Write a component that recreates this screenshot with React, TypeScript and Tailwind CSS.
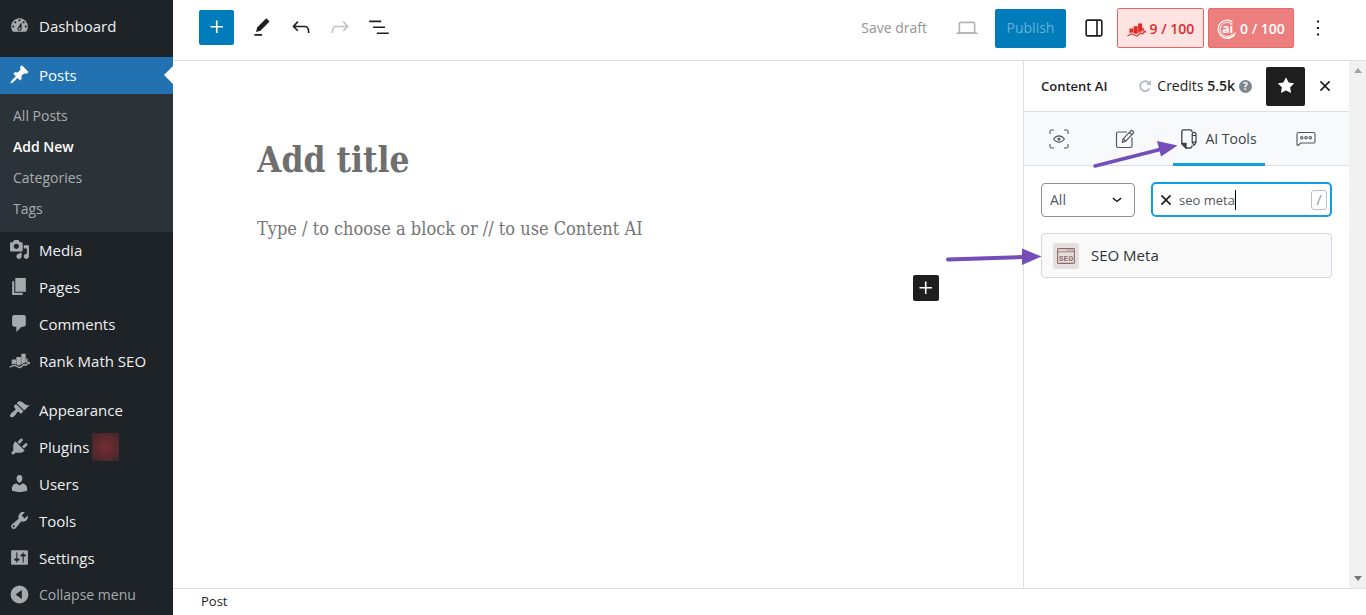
import React from "react";

type IconProps = { d: string; className?: string; box?: number };

function Glyph({ d, className = "size-5", box = 20 }: IconProps) {
  return (
    <svg viewBox={`0 0 ${box} ${box}`} className={className} fill="currentColor" fillRule="evenodd" aria-hidden="true">
      <path d={d} />
    </svg>
  );
}

const dash = {
  dashboard:
    "M3.76 16h12.48c1.1-1.37 1.76-3.11 1.76-5 0-4.42-3.58-8-8-8s-8 3.58-8 8c0 1.89.66 3.63 1.76 5zM10 4c.55 0 1 .45 1 1s-.45 1-1 1-1-.45-1-1 .45-1 1-1zM6 6c.55 0 1 .45 1 1s-.45 1-1 1-1-.45-1-1 .45-1 1-1zm8 0c.55 0 1 .45 1 1s-.45 1-1 1-1-.45-1-1 .45-1 1-1zm-5.37 5.55L12 7v6c0 1.1-.9 2-2 2s-2-.9-2-2c0-.57.24-1.08.63-1.45zM4 10c.55 0 1 .45 1 1s-.45 1-1 1-1-.45-1-1 .45-1 1-1zm12 0c.55 0 1 .45 1 1s-.45 1-1 1-1-.45-1-1 .45-1 1-1zm-5 3c0-.55-.45-1-1-1s-1 .45-1 1 .45 1 1 1 1-.45 1-1z",
  post: "M10.44 3.02l1.82-1.82 6.36 6.35-1.83 1.82c-1.05-.68-2.48-.57-3.41.36l-.75.75c-.92.93-1.04 2.35-.35 3.41l-1.83 1.82-2.41-2.41-2.8 2.79c-.42.42-3.38 2.71-3.8 2.29s1.86-3.39 2.28-3.81l2.79-2.79L4.1 9.36l1.83-1.82c1.05.69 2.48.57 3.4-.36l.75-.75c.93-.92 1.05-2.35.36-3.41z",
  media:
    "M13 11V4c0-.55-.45-1-1-1h-1.67L9 1H5L3.67 3H2c-.55 0-1 .45-1 1v7c0 .55.45 1 1 1h10c.55 0 1-.45 1-1zM7 4.5c1.38 0 2.5 1.12 2.5 2.5S8.38 9.5 7 9.5 4.5 8.38 4.5 7 5.62 4.5 7 4.5zM14 6h5v10.5c0 1.38-1.12 2.5-2.5 2.5S14 17.88 14 16.5s1.12-2.5 2.5-2.5c.17 0 .34.02.5.05V9h-3V6zm-4 8.05V13h2v3.5c0 1.38-1.12 2.5-2.5 2.5S7 17.88 7 16.5 8.12 14 9.5 14c.17 0 .34.02.5.05z",
  page: "M6 15V2h10v13H6zm-1 1h8v2H3V5h2v11z",
  comments: "M5 2h9c1.1 0 2 .9 2 2v7c0 1.1-.9 2-2 2h-2l-5 5v-5H5c-1.1 0-2-.9-2-2V4c0-1.1.9-2 2-2z",
  rank: "M2.600 9h4v4.800l-1.800-.9-2.200 1.100zM7 6.600h4.300v6.600l-1.300 1.800-3-1.200zM11.700 3.600h4.200v9l-1.400-.8-2.800 2.500zM16.300 8.200h1.400v3.200l-1.400 1zM.3 16l4.600-2.100 5.300 2.400 4.300-3.400 1.300.9 2-1.500-.7-.8 2.900-.4-.5 2.700-.7-.7-3 2.300-1.300-.9-3.900 3.200-5.600-2.400-4.200 1.700z",
  appearance:
    "M14.48 11.06L7.41 3.99l1.5-1.5c.5-.56 2.3-.47 3.51.32 1.21.8 1.43 1.28 2.91 2.1 1.18.64 2.45 1.26 4.45.85zm-.71.71L6.7 4.7 4.93 6.47c-.39.39-.39 1.02 0 1.41l1.06 1.06c.39.39.39 1.03 0 1.42-.6.6-1.43 1.11-2.21 1.69-.35.26-.7.53-1.01.84C1.43 14.23.4 16.08 1.4 17.07c.99 1 2.84-.03 4.18-1.36.31-.31.58-.66.85-1.02.57-.78 1.08-1.61 1.69-2.21.39-.39 1.02-.39 1.41 0l1.06 1.06c.39.39 1.02.39 1.41 0z",
  plugins:
    "M13.11 4.36L9.87 7.6 8 5.73l3.24-3.24c.35-.34 1.05-.2 1.56.32.52.51.66 1.21.31 1.55zm-8 1.77l.91-1.12 9.01 9.01-1.19.84c-.71.71-2.63 1.16-3.82 1.16H6.14L4.9 17.26c-.59.59-1.54.59-2.12 0-.59-.58-.59-1.53 0-2.12l1.24-1.24v-3.88c0-1.13.4-3.19 1.09-3.89zm7.26 3.97l3.24-3.24c.34-.35 1.04-.21 1.55.31.52.51.66 1.21.31 1.55l-3.24 3.25z",
  users:
    "M10 9.25c-2.27 0-2.73-3.44-2.73-3.44C7 4.02 7.82 2 9.97 2c2.16 0 2.98 2.02 2.71 3.81 0 0-.41 3.44-2.68 3.44zm0 2.57L12.72 10c2.39 0 4.52 2.33 4.52 4.53v2.49s-3.65 1.13-7.24 1.13c-3.65 0-7.24-1.13-7.24-1.13v-2.49c0-2.25 1.94-4.48 4.47-4.48z",
  tools:
    "M16.68 9.77c-1.34 1.34-3.3 1.67-4.95.99l-5.41 6.52c-.99.99-2.59.99-3.58 0s-.99-2.59 0-3.57l6.52-5.42c-.68-1.65-.35-3.61.99-4.95 1.28-1.28 3.12-1.62 4.72-1.06l-2.89 2.89 2.82 2.82 2.86-2.87c.53 1.58.18 3.39-1.08 4.65zM3.81 16.21c.4.39 1.04.39 1.43 0 .4-.4.4-1.04 0-1.43-.39-.4-1.03-.4-1.43 0-.39.39-.39 1.03 0 1.43z",
  settings:
    "M18 16V4c0-.55-.45-1-1-1H3c-.55 0-1 .45-1 1v12c0 .55.45 1 1 1h14c.55 0 1-.45 1-1zM8 11h1c.55 0 1 .45 1 1s-.45 1-1 1H8v1.5c0 .28-.22.5-.5.5s-.5-.22-.5-.5V13H6c-.55 0-1-.45-1-1s.45-1 1-1h1V5.500c0-.28.22-.5.5-.5s.5.22.5.5V11zm5-2h-1c-.55 0-1-.45-1-1s.45-1 1-1h1V5.500c0-.28.22-.5.5-.5s.5.22.5.5V7h1c.55 0 1 .45 1 1s-.45 1-1 1h-1v5.500c0 .28-.22.5-.5.5s-.5-.22-.5-.5V9z",
  collapse: "M10 1.5a8.5 8.5 0 1 1 0 17 8.5 8.5 0 0 1 0-17zM12.2 5.8L6.2 10l6 4.2z",
};

const wp = {
  plus: "M11 12.5V17.5H12.5V12.5H17.5V11H12.5V6H11V11H6V12.5H11Z",
  pencil: "m19 7-3-3-8.5 8.5-1 4 4-1L19 7Zm-7 11.5H5V20h7v-1.5Z",
  undo: "M18.3 11.7c-.6-.6-1.4-.9-2.3-.9H6.7l2.9-3.3-1.1-1-4.5 5L8.5 16l1-1-2.7-2.7H16c.5 0 .9.2 1.3.5 1 1 1 3.4 1 4.5v.3h1.5v-.2c0-1.5 0-4.3-1.5-5.7z",
  redo: "M15.6 6.5l-1.1 1 2.9 3.3H8c-.9 0-1.7.3-2.3.9-1.4 1.5-1.4 4.2-1.4 5.6v.2h1.5v-.3c0-1.1 0-3.5 1-4.5.3-.3.7-.5 1.3-.5h9.2L14.5 15l1.1 1.1 4.6-4.6-4.6-5z",
  list: "M3 6h11v1.5H3V6Zm3.5 5.5h11V13h-11v-1.5ZM21 17H10v1.5h11V17Z",
  desktop:
    "M20.5 16h-.7V8c0-1.1-.9-2-2-2H6.2c-1.1 0-2 .9-2 2v8h-.7c-.8 0-1.5.7-1.5 1.5h20c0-.8-.7-1.5-1.5-1.5zM5.7 8c0-.3.2-.5.5-.5h11.6c.3 0 .5.2.5.5v7.6H5.7V8z",
  drawer:
    "M18 4H6c-1.1 0-2 .9-2 2v12c0 1.1.9 2 2 2h12c1.1 0 2-.9 2-2V6c0-1.1-.9-2-2-2zm-4 14.5H6c-.3 0-.5-.2-.5-.5V6c0-.3.2-.5.5-.5h8v13zm4.5-.5c0 .3-.2.5-.5.5h-2.5v-13H18c.3 0 .5.2.5.5v12z",
  star: "M11.776 4.454a.25.25 0 01.448 0l2.069 4.192a.25.25 0 00.188.137l4.626.672a.25.25 0 01.139.426l-3.348 3.263a.25.25 0 00-.072.222l.79 4.607a.25.25 0 01-.362.263l-4.138-2.175a.25.25 0 00-.232 0l-4.138 2.175a.25.25 0 01-.363-.263l.79-4.607a.25.25 0 00-.071-.222L4.754 9.881a.25.25 0 01.139-.426l4.626-.672a.25.25 0 00.188-.137l2.069-4.192z",
  more: "M13 19h-2v-2h2v2zm0-6h-2v-2h2v2zm0-6h-2V5h2v2z",
  close: "M12 13.06l3.712 3.713 1.061-1.06L13.061 12l3.712-3.712-1.06-1.06L12 10.938 8.288 7.227l-1.061 1.06L10.939 12l-3.712 3.712 1.06 1.061L12 13.061z",
  chevron: "M17.5 11.6L12 16l-5.5-4.4 1.100-1.400L12 13.700l4.400-3.500 1.100 1.400z",
};

const submenu = ["All Posts", "Add New", "Categories", "Tags"];

const contentMenu = [
  { label: "Media", d: dash.media },
  { label: "Pages", d: dash.page },
  { label: "Comments", d: dash.comments },
  { label: "Rank Math SEO", d: dash.rank },
];

const adminMenu = [
  { label: "Appearance", d: dash.appearance },
  { label: "Plugins", d: dash.plugins, badge: true },
  { label: "Users", d: dash.users },
  { label: "Tools", d: dash.tools },
  { label: "Settings", d: dash.settings },
];

function MenuItem({ label, d, badge }: { label: string; d: string; badge?: boolean }) {
  return (
    <li>
      <a href="#" className="flex h-[37px] items-center gap-[9px] pb-[2px] pl-[9px] text-[#f0f0f1]">
        <Glyph d={d} className="size-[21px] text-[#a7aaad]" />
        <span>{label}</span>
        {badge && (
          <span className="-ml-[6px] h-7 w-[27px] bg-[radial-gradient(circle,#6f2c31_15%,#5a292d_55%,#3a272a_100%)]" />
        )}
      </a>
    </li>
  );
}

function Sidebar() {
  return (
    <nav aria-label="Main menu" className="w-[173px] shrink-0 bg-[#1d2327] pt-[8px] text-[15px] leading-5">
      <ul className="mb-3">
        <MenuItem label="Dashboard" d={dash.dashboard} />
      </ul>
      <a href="#" className="relative flex h-[37px] items-center gap-[9px] bg-[#2271b1] pb-[2px] pl-[9px] text-white">
        <Glyph d={dash.post} className="size-[21px]" />
        <span>Posts</span>
        <svg viewBox="0 0 9 18" className="absolute top-[9px] right-0 h-[18px] w-[9px]" aria-hidden="true">
          <path d="M9 0v18L0 9z" fill="#fff" />
        </svg>
      </a>
      <ul className="bg-[#2c3338] pt-[6px] pb-2 text-sm">
        {submenu.map((label) => (
          <li key={label}>
            <a
              href="#"
              className={
                label === "Add New"
                  ? "flex h-[31px] items-center pl-[13px] font-semibold text-white"
                  : "flex h-[31px] items-center pl-[13px] text-[#a9acaf]"
              }
            >
              {label}
            </a>
          </li>
        ))}
      </ul>
      <ul className="mb-3">
        {contentMenu.map((m) => (
          <MenuItem key={m.label} {...m} />
        ))}
      </ul>
      <ul>
        {adminMenu.map((m) => (
          <MenuItem key={m.label} {...m} />
        ))}
      </ul>
      <button type="button" className="flex h-[37px] items-center gap-[9px] pb-[2px] pl-[9px] text-sm text-[#a7aaad]">
        <Glyph d={dash.collapse} className="size-[21px]" />
        Collapse menu
      </button>
    </nav>
  );
}

function ToolButton({ label, d, className = "" }: { label: string; d: string; className?: string }) {
  return (
    <button type="button" aria-label={label} className={`flex h-10 w-[39px] items-center justify-center ${className}`}>
      <Glyph d={d} box={24} className="size-[26px]" />
    </button>
  );
}

function ContentAiMark() {
  return (
    <svg viewBox="0 0 20 20" className="size-5" fill="none" stroke="currentColor" aria-hidden="true">
      <path d="M18.400 13.800A9 9 0 1 1 15.500 2.900" strokeWidth="1.300" />
      <path d="M15.800 14.800A7.100 7.100 0 1 1 13.700 4.200" strokeWidth="1" />
      <path d="M17.500 15.800A9 9 0 0 1 10.500 19" strokeWidth="1.600" />
      <text
        x="10.800"
        y="14"
        textAnchor="middle"
        fontSize="12"
        fontWeight="700"
        fill="currentColor"
        stroke="none"
      >
        ai
      </text>
    </svg>
  );
}

function TopBar() {
  return (
    <header className="flex h-[61px] items-start justify-between border-b border-[#e0e0e0] pr-[38px] pl-[26px]">
      <div className="flex items-center pt-[7px]">
        <button
          type="button"
          aria-label="Add block"
          className="mr-2 flex size-[35px] items-center justify-center rounded-xs bg-[#007cba] text-white"
        >
          <Glyph d={wp.plus} box={24} className="size-[26px]" />
        </button>
        <ToolButton label="Tools" d={wp.pencil} />
        <ToolButton label="Undo" d={wp.undo} />
        <ToolButton label="Redo" d={wp.redo} className="text-[#c4c4c4]" />
        <ToolButton label="Document overview" d={wp.list} />
      </div>
      <div className="flex items-center pt-2 text-sm">
        <button type="button" className="mr-5 h-10 text-[#949494]">
          Save draft
        </button>
        <ToolButton label="Preview" d={wp.desktop} className="mr-[9px] text-[#b5b5b5]" />
        <button type="button" className="mr-2 h-[39px] w-[71px] rounded-xs bg-[#007cba] text-[#66b0d6]">
          Publish
        </button>
        <ToolButton label="Settings panel" d={wp.drawer} className="mr-1" />
        <button
          type="button"
          className="mr-1 flex h-10 w-[87px] items-center justify-center gap-1 rounded-xs border border-[#ef6460] bg-[#fde4e3] pt-[2px] font-semibold text-[#e02b27]"
        >
          <Glyph d={dash.rank} className="size-[19px]" />9 / 100
        </button>
        <button
          type="button"
          className="mr-[14px] flex h-10 w-[86px] items-center justify-center gap-[3px] rounded-xs border border-[#e8686a] bg-[#ed7e7e] pt-[2px] font-semibold text-white"
        >
          <ContentAiMark />0 / 100
        </button>
        <button type="button" aria-label="Options" className="flex size-5 items-center justify-center">
          <Glyph d={wp.more} box={24} className="size-[26px] shrink-0" />
        </button>
      </div>
    </header>
  );
}

function Editor() {
  return (
    <main className="flex min-w-0 flex-1 flex-col px-[84px] pt-[73px] font-['DejaVu_Serif_Condensed','DejaVu_Serif',serif] text-[#757575]">
      <input
        aria-label="Add title"
        placeholder="Add title"
        className="h-[52px] w-full text-[35px] font-bold outline-none placeholder:text-[#6f6f6f] placeholder:opacity-100"
      />
      <input
        aria-label="Block content"
        placeholder="Type / to choose a block or // to use Content AI"
        className="mt-[26px] h-8 w-full text-lg outline-none placeholder:text-[#757575] placeholder:opacity-100"
      />
      <button
        type="button"
        aria-label="Add block"
        className="mt-[31px] flex size-[26px] items-center justify-center self-end rounded-xs bg-[#1e1e1e] text-white"
      >
        <Glyph d={wp.plus} box={24} className="size-[26px]" />
      </button>
    </main>
  );
}

function Tabs() {
  return (
    <div role="tablist" className="flex h-[54px] gap-[30px] border-b border-[#dcdfe3] bg-[#f8f9fa] px-[17px] text-[#50575e]">
      <button role="tab" type="button" aria-label="Research" className="flex w-9 items-center justify-center">
        <svg viewBox="0 0 20 20" className="size-5" fill="none" stroke="currentColor" strokeWidth="1.1" aria-hidden="true">
          <path d="M1 5V2.5A1.5 1.5 0 0 1 2.5 1H5M15 1h2.5A1.5 1.5 0 0 1 19 2.5V5M19 15v2.5a1.5 1.5 0 0 1-1.5 1.5H15M5 19H2.5A1.5 1.5 0 0 1 1 17.5V15" />
          <path d="M4.5 10c3.2-4.2 7.8-4.2 11 0-3.2 4.2-7.8 4.2-11 0z" />
          <circle cx="10" cy="10" r="1" fill="currentColor" />
        </svg>
      </button>
      <button role="tab" type="button" aria-label="Write" className="flex w-9 items-center justify-center">
        <svg viewBox="0 0 20 20" className="size-5" fill="none" stroke="currentColor" strokeWidth="1.2" strokeLinejoin="round" aria-hidden="true">
          <path d="M12 3H3a1.5 1.5 0 0 0-1.5 1.5v12.5A1.5 1.5 0 0 0 3 18.5h12.5A1.5 1.5 0 0 0 17 17V8.5" />
          <path d="M7.3 13.4l.8-3.6 7.7-8c1-1 3.6 1.2 2.5 2.4l-7.6 8zM14.3 3.3l2.6 2.4M8.1 9.8l2.6 2.4" />
        </svg>
      </button>
      <button
        role="tab"
        type="button"
        aria-selected="true"
        className="flex h-[54px] w-[92px] items-center justify-center gap-2 border-t-3 border-b-3 border-t-transparent border-b-[#10a0e2] text-sm whitespace-nowrap text-[#3c4146]"
      >
        <svg viewBox="0 0 16 20" className="h-5 w-4 shrink-0" fill="none" stroke="currentColor" strokeWidth="1.3" strokeLinejoin="round" aria-hidden="true">
          <path d="M11 3.2V2.6A1.700 1.700 0 0 0 9.300.9H2.500A1.700 1.700 0 0 0 .8 2.600v12.200L5 19h4.300a1.700 1.700 0 0 0 1.700-1.700v-1" />
          <path d="M.8 14.500H5V19z" fill="currentColor" />
          <path d="M11.200 5.200a1.900 1.900 0 0 1 3.800 0v8.300l-1.900 2.900-1.900-2.900zM11.200 6.500H15M11.200 13.200H15" strokeWidth="1.200" />
        </svg>
        AI Tools
      </button>
      <button role="tab" type="button" aria-label="Chat" className="flex w-[22px] items-center justify-center">
        <svg viewBox="0 0 20 20" className="size-5" fill="none" stroke="currentColor" strokeWidth="1.1" strokeLinejoin="round" aria-hidden="true">
          <path d="M2.500 3.500h15A1.500 1.500 0 0 1 19 5v7.500a1.500 1.500 0 0 1-1.500 1.500H5l-3.200 2.500L1 15.900V5a1.500 1.500 0 0 1 1.500-1.500z" />
          <circle cx="5.700" cy="8.700" r="1.200" />
          <circle cx="10" cy="8.700" r="1.200" />
          <circle cx="14.300" cy="8.700" r="1.200" />
        </svg>
      </button>
    </div>
  );
}

function SeoIcon() {
  return (
    <span className="flex size-[26px] items-center justify-center rounded-[3px] bg-[#e6dfdf]">
      <svg viewBox="0 0 18 16" className="h-4 w-[18px]" fill="none" stroke="#8d6e66" aria-hidden="true">
        <rect x=".6" y=".6" width="16.8" height="14.8" rx=".8" strokeWidth="1.1" />
        <path d="M.6 3.800h16.800M10 2.200h1.200M12.300 2.200h1.200M14.600 2.200h1.200" strokeWidth=".9" />
        <text x="9" y="12.600" textAnchor="middle" fontSize="8" fontWeight="700" fontFamily="Liberation Mono, monospace" fill="#8d6e66" stroke="none">
          SEO
        </text>
      </svg>
    </span>
  );
}

function ContentAiPanel() {
  return (
    <aside aria-label="Content AI" className="w-[326px] shrink-0 border-l border-[#e0e0e0]">
      <div className="flex h-[51px] items-center border-b border-[#e0e0e0] pl-[17px] text-sm">
        <h2 className="mr-auto text-[13px] font-semibold">Content AI</h2>
        <button type="button" aria-label="Refresh credits" className="mr-[5px] text-[#b3bfcb]">
          <svg viewBox="0 0 14 14" className="size-[14px]" fill="none" stroke="currentColor" strokeWidth="2" aria-hidden="true">
            <path d="M11.5 9.5A5 5 0 1 1 11 4" />
            <path d="M13 1v5H8z" fill="currentColor" stroke="none" />
          </svg>
        </button>
        <span className="mr-1 whitespace-nowrap">
          Credits <strong className="font-semibold">5.5k</strong>
        </span>
        <button
          type="button"
          aria-label="Help"
          className="mr-[14px] flex size-[13px] items-center justify-center rounded-full bg-[#7f868d] text-[10px] leading-none font-bold text-white"
        >
          ?
        </button>
        <button type="button" aria-label="Unpin" className="flex size-[39px] items-center justify-center rounded-xs bg-[#1e1e1e] text-white">
          <Glyph d={wp.star} box={24} className="size-[26px]" />
        </button>
        <button type="button" aria-label="Close" className="mr-1 flex size-10 items-center justify-center">
          <Glyph d={wp.close} box={24} className="size-[26px]" />
        </button>
      </div>
      <Tabs />
      <div className="px-[17px] py-4">
        <div className="flex items-center gap-4">
          <div className="relative w-[94px]">
            <select
              aria-label="Category"
              className="h-[34px] w-full appearance-none rounded-[4px] border border-[#8c8f94] bg-white pl-2 text-sm text-[#50575e]"
            >
              <option>All</option>
            </select>
            <Glyph d={wp.chevron} box={24} className="pointer-events-none absolute top-[6px] right-2 size-5" />
          </div>
          <div className="relative flex h-[35px] min-w-0 flex-1 items-center rounded-[5px] border-2 border-[#10a0e2] bg-white">
            <button type="button" aria-label="Clear search" className="flex w-[26px] shrink-0 items-center justify-center">
              <Glyph d={wp.close} box={24} className="size-[26px] shrink-0" />
            </button>
            <input
              type="text"
              aria-label="Search tools"
              defaultValue="seo meta"
              className="h-full w-full min-w-0 text-[13px] text-[#50575e] outline-none"
            />
            <span className="absolute top-[6px] left-[82px] h-5 w-px bg-black" />
            <kbd className="mr-[3px] flex h-5 w-4 shrink-0 items-center justify-center rounded-[3px] border border-[#b9c0c8] font-[inherit] text-sm text-[#8d949b]">
              /
            </kbd>
          </div>
        </div>
        <button
          type="button"
          className="mt-4 flex h-[45px] w-full items-center gap-3 rounded-[4px] border border-[#cfd6dd] bg-[#fafafa] px-[11px] text-[15px] text-[#2c3338]"
        >
          <SeoIcon />
          SEO Meta
        </button>
      </div>
    </aside>
  );
}

function ScrollTrack() {
  return (
    <div aria-hidden="true" className="flex w-[17px] shrink-0 flex-col items-center justify-between bg-[#f1f1f1] py-[7px] text-[#a3a3a3]">
      <svg viewBox="0 0 8 5" className="h-[5px] w-2">
        <path d="M0 5l4-5 4 5z" fill="currentColor" />
      </svg>
      <svg viewBox="0 0 8 5" className="h-[5px] w-2">
        <path d="M0 0l4 5 4-5z" fill="#777" />
      </svg>
    </div>
  );
}

function Arrows() {
  return (
    <>
      <svg viewBox="0 0 88 30" className="pointer-events-none absolute top-[139px] right-[186px] h-[30px] w-[88px]" aria-hidden="true">
        <path d="M3 27L70 10" stroke="#744db8" strokeWidth="3.6" strokeLinecap="round" />
        <path d="M65 2L85.500 6.500L69 17.500z" fill="#744db8" />
      </svg>
      <svg viewBox="0 0 98 20" className="pointer-events-none absolute top-[247px] right-[323px] h-5 w-[98px]" aria-hidden="true">
        <path d="M3 12.500L78 10" stroke="#744db8" strokeWidth="4" strokeLinecap="round" />
        <path d="M77 1.500L96.500 9.500L77 18z" fill="#744db8" />
      </svg>
    </>
  );
}

export default function App() {
  return (
    <div className="relative flex min-h-screen bg-white font-['Open_Sans','Noto_Sans',sans-serif] text-[#1e1e1e]">
      <Sidebar />
      <div className="flex min-w-0 flex-1 flex-col">
        <TopBar />
        <div className="flex flex-1">
          <Editor />
          <ContentAiPanel />
          <ScrollTrack />
        </div>
        <footer className="flex h-[27px] items-center border-t border-[#e0e0e0] pl-7 text-[13px]">Post</footer>
      </div>
      <Arrows />
    </div>
  );
}
